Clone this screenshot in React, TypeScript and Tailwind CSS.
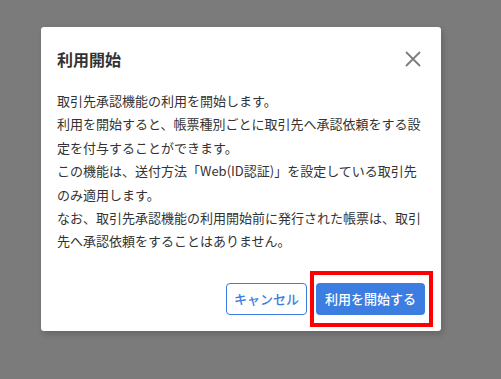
const lines = [
  "取引先承認機能の利用を開始します。",
  "利用を開始すると、帳票種別ごとに取引先へ承認依頼をする設",
  "定を付与することができます。",
  "この機能は、送付方法「Web(ID認証)」を設定している取引先",
  "のみ適用します。",
  "なお、取引先承認機能の利用開始前に発行された帳票は、取引",
  "先へ承認依頼をすることはありません。",
]

export default function App() {
  return (
    <main
      className="h-[379px] w-[501px] overflow-hidden bg-[#7b7b7b] pl-[41px] pt-[27px] text-[#333333]"
      style={{ fontFamily: '"Noto Sans CJK JP", "Noto Sans", sans-serif' }}
    >
      <div className="flex w-[400px] flex-col rounded-[3px] bg-white shadow-[2px_3px_6px_rgba(0,0,0,0.18)]">
        <div className="flex items-center justify-between pl-[16px] pr-[20px] pt-[20px]">
          <h2 className="text-[16px] font-bold leading-[24px]">利用開始</h2>
          <button className="text-[#7d7d7d]">
            <svg width="16" height="16" viewBox="0 0 16 16" fill="none" stroke="currentColor" strokeWidth="1.8" strokeLinecap="round">
              <path d="M1.5 1.5 14.5 14.5M14.5 1.5 1.5 14.5" />
            </svg>
          </button>
        </div>

        <div className="px-[16px] pt-[18px] text-[13px] leading-[23.4px]">
          {lines.map((l) => (
            <p key={l} className="whitespace-nowrap">{l}</p>
          ))}
        </div>

        <div className="flex justify-end gap-[9px] px-[16px] pb-[16px] pt-[30px]">
          <button className="h-[32px] w-[81px] rounded-[4px] border border-[#3b7de0] bg-white text-[13px] font-medium text-[#3b7de0]">
            キャンセル
          </button>
          <div className="relative">
            <button className="h-[32px] w-[109px] rounded-[4px] bg-[#3b7de0] text-[13px] font-medium text-white">
              利用を開始する
            </button>
            <span className="pointer-events-none absolute -bottom-[12px] -left-[6px] -right-[8px] -top-[12px] border-[4px] border-[#ff0000]" />
          </div>
        </div>
      </div>
    </main>
  )
}
